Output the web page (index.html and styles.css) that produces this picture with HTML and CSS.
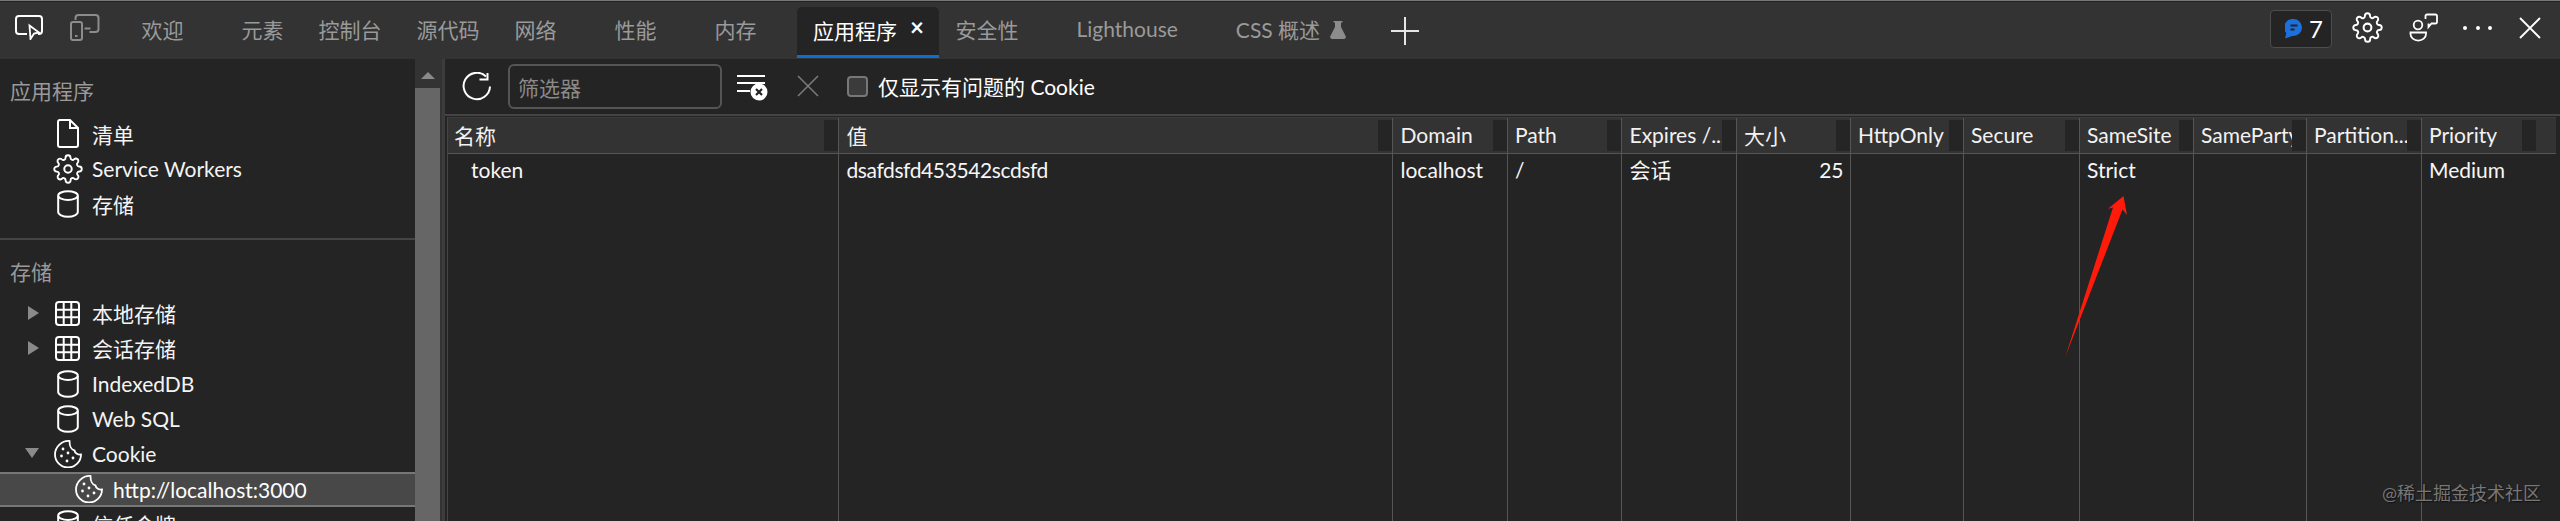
FILE: index.html
```html
<!DOCTYPE html>
<html lang="zh-CN">
<head>
<meta charset="utf-8">
<title>DevTools 应用程序</title>
<link rel="stylesheet" href="styles.css">
</head>
<body>
<svg class="defs" width="0" height="0" aria-hidden="true">
  <symbol id="gear" viewBox="0 0 24 24"><circle cx="12" cy="12" r="3" fill="none" stroke="currentColor" stroke-width="1.6"/><path fill="none" stroke="currentColor" stroke-width="1.5" d="M19.4 15a1.65 1.65 0 0 0 .33 1.82l.06.06a2 2 0 0 1 0 2.83 2 2 0 0 1-2.83 0l-.06-.06a1.65 1.65 0 0 0-1.82-.33 1.65 1.65 0 0 0-1 1.51V21a2 2 0 0 1-2 2 2 2 0 0 1-2-2v-.09A1.65 1.65 0 0 0 9 19.4a1.65 1.65 0 0 0-1.82.33l-.06.06a2 2 0 0 1-2.83 0 2 2 0 0 1 0-2.83l.06-.06a1.65 1.65 0 0 0 .33-1.82 1.65 1.65 0 0 0-1.51-1H3a2 2 0 0 1-2-2 2 2 0 0 1 2-2h.09A1.65 1.65 0 0 0 4.6 9a1.65 1.65 0 0 0-.33-1.82l-.06-.06a2 2 0 0 1 0-2.83 2 2 0 0 1 2.83 0l.06.06a1.65 1.65 0 0 0 1.82.33H9a1.65 1.65 0 0 0 1-1.51V3a2 2 0 0 1 2-2 2 2 0 0 1 2 2v.09a1.65 1.65 0 0 0 1 1.51 1.65 1.65 0 0 0 1.82-.33l.06-.06a2 2 0 0 1 2.83 0 2 2 0 0 1 0 2.83l-.06.06a1.65 1.65 0 0 0-.33 1.82V9a1.65 1.65 0 0 0 1.51 1H21a2 2 0 0 1 2 2 2 2 0 0 1-2 2h-.09a1.65 1.65 0 0 0-1.51 1z"/></symbol>
  <symbol id="db" viewBox="0 0 22 28"><g fill="none" stroke="currentColor" stroke-width="2"><path d="M1.2 6v16c0 2.6 4.4 4.8 9.8 4.8s9.8-2.2 9.8-4.8V6"/><ellipse cx="11" cy="5.6" rx="9.8" ry="4.4"/></g></symbol>
  <symbol id="grid" viewBox="0 0 25 25"><g fill="none" stroke="currentColor" stroke-width="2"><rect x="1" y="1" width="23" height="23" rx="3"/><path d="M8.7 1v23M16.3 1v23M1 8.7h23M1 16.3h23"/></g></symbol>
  <symbol id="cookie" viewBox="0 0 28 28"><path fill="none" stroke="currentColor" stroke-width="1.8" d="M15.5 1C8 .5 1 6.5 1 14.5a13 13 0 0 0 26 0c-3 .5-6-1-6.500-4-3 -.5-5-4.500-5-9.500z"/><g fill="currentColor"><circle cx="9" cy="9" r="1.400"/><circle cx="14" cy="13" r="1.400"/><circle cx="7.500" cy="16" r="1.400"/><circle cx="13" cy="21" r="1.400"/><circle cx="19" cy="18" r="1.400"/></g></symbol>
</svg>

<div class="app">
  <header class="topbar">
    <div class="tool-icons">
      <svg class="ic-inspect" width="28" height="25" viewBox="0 0 28 25"><path fill="none" stroke="#fff" stroke-width="2" d="M12 19H4a3 3 0 0 1-3-3V4a3 3 0 0 1 3-3h20a3 3 0 0 1 3 3v12a3 3 0 0 1-3 3h-1"/><path fill="#333" stroke="#fff" stroke-width="1.800" d="M14.500 10.500l9.500 7-5 1-3.500 5.500z"/></svg>
      <svg class="ic-device" width="30" height="27" viewBox="0 0 30 27"><g fill="none" stroke="#8c8c8c" stroke-width="2"><path d="M5.500 6V4a3 3 0 0 1 3-3h17a3 3 0 0 1 3 3v11a3 3 0 0 1-3 3h-6"/><rect x="1" y="8" width="11" height="18" rx="2"/><path d="M14.500 14.500h6M5 22h2.500"/></g></svg>
    </div>
    <nav class="tabs">
      <span class="tab">欢迎</span>
      <span class="tab tab-gap">元素</span>
      <span class="tab">控制台</span>
      <span class="tab">源代码</span>
      <span class="tab">网络</span>
      <span class="tab tab-gap">性能</span>
      <span class="tab tab-gap">内存</span>
      <span class="tab tab-active tab-gap">应用程序<span class="tab-close">×</span></span>
      <span class="tab tab-after">安全性</span>
      <span class="tab tab-gap">Lighthouse</span>
      <span class="tab tab-gap">CSS 概述<svg class="ic-flask" width="16" height="18" viewBox="0 0 16 18"><path fill="#8c8c8c" d="M3.500 0h9v1.500h-1.500v4.500l4.700 9.300c.5 1.200-.2 2.700-1.700 2.700H2c-1.500 0-2.200-1.500-1.700-2.700L5 6V1.500H3.500z"/></svg></span>
      <svg class="ic-plus" width="28" height="28" viewBox="0 0 28 28"><path stroke="#e6e6e6" stroke-width="2" d="M14 0v28M0 14h28"/></svg>
    </nav>
    <div class="top-right">
      <span class="badge">
        <svg width="17" height="20" viewBox="0 0 17 20"><path fill="#1b6fde" d="M8.500 0a8.500 8.500 0 0 1 0 17c-1.200 0-2.300-.2-3.300 .7L0 19.500l1.300-5.400A8.500 8.500 0 0 1 8.500 0z"/><path stroke="#242424" stroke-width="1.800" d="M5.500 6.500h7M5.500 10.500h4"/></svg>
        <span>7</span>
      </span>
      <svg class="ic-gear" width="31" height="31"><use href="#gear"/></svg>
      <svg class="ic-people" width="29" height="29" viewBox="0 0 29 29"><g fill="none" stroke="#fff" stroke-width="1.800"><circle cx="9" cy="12" r="4.300"/><path d="M1.500 19.500h15.500v1.500a7.700 6.500 0 0 1-15.500 0z"/><path d="M18 1.500h8.500a1.500 1.500 0 0 1 1.500 1.500v6a1.500 1.500 0 0 1-1.500 1.500h-4L19.500 14v-3.500M16.500 6V3A1.500 1.500 0 0 1 18 1.500"/></g></svg>
      <span class="dots"><i></i><i></i><i></i></span>
      <svg class="ic-close" width="22" height="22" viewBox="0 0 22 22"><path stroke="#fff" stroke-width="1.800" d="M1 1l20 20M21 1L1 21"/></svg>
    </div>
  </header>

  <div class="content">
    <aside class="sidebar">
      <section class="sb-section sb-first">
        <h2 class="sb-title">应用程序</h2>
        <div class="row"><span class="slot"><svg width="22" height="29" viewBox="0 0 22 29"><path fill="none" stroke="#fff" stroke-width="2" d="M3 1h10l8 8v17a2 2 0 0 1-2 2H3a2 2 0 0 1-2-2V3a2 2 0 0 1 2-2zM13 1v8h8"/></svg></span>清单</div>
        <div class="row"><span class="slot"><svg width="30" height="30"><use href="#gear"/></svg></span>Service Workers</div>
        <div class="row"><span class="slot"><svg width="22" height="28"><use href="#db"/></svg></span>存储</div>
      </section>
      <section class="sb-section sb-second">
        <h2 class="sb-title">存储</h2>
        <div class="row"><span class="arrow arrow-right"></span><span class="slot"><svg width="25" height="25"><use href="#grid"/></svg></span>本地存储</div>
        <div class="row"><span class="arrow arrow-right"></span><span class="slot"><svg width="25" height="25"><use href="#grid"/></svg></span>会话存储</div>
        <div class="row"><span class="slot"><svg width="22" height="28"><use href="#db"/></svg></span>IndexedDB</div>
        <div class="row"><span class="slot"><svg width="22" height="28"><use href="#db"/></svg></span>Web SQL</div>
        <div class="row"><span class="arrow arrow-down"></span><span class="slot"><svg width="28" height="28"><use href="#cookie"/></svg></span>Cookie</div>
        <div class="row row-selected"><span class="slot"><svg width="28" height="28"><use href="#cookie"/></svg></span>http://localhost:3000</div>
        <div class="row"><span class="slot"><svg width="22" height="28"><use href="#db"/></svg></span>信任令牌</div>
      </section>
    </aside>
    <div class="vscroll"><span class="vscroll-up"></span><span class="vscroll-thumb"></span></div>

    <main class="main">
      <div class="toolbar">
        <svg class="ic-refresh" width="30" height="29" viewBox="0 0 30 29"><g fill="none" stroke="#fff" stroke-width="2"><path d="M24 4.500A13.200 13.200 0 1 0 28 14.500"/><path d="M17.500 7.500h8V1"/></g></svg>
        <div class="filter">筛选器</div>
        <svg class="ic-clear" width="32" height="28" viewBox="0 0 32 28"><path stroke="#fff" stroke-width="2" d="M0 2h28M0 9h28M0 17h13"/><circle cx="22" cy="18" r="8.500" fill="#fff"/><path stroke="#242424" stroke-width="2.200" d="M19 15l6 6M25 15l-6 6"/></svg>
        <svg class="ic-x" width="22" height="22" viewBox="0 0 22 22"><path stroke="#7a7a7a" stroke-width="1.600" d="M1 1l20 20M21 1L1 21"/></svg>
        <label class="check"><span class="box"></span>仅显示有问题的 Cookie</label>
      </div>
      <div class="table">
        <div class="th th-name">名称</div>
        <div class="th">值</div>
        <div class="th">Domain</div>
        <div class="th">Path</div>
        <div class="th">Expires /...</div>
        <div class="th">大小</div>
        <div class="th">HttpOnly</div>
        <div class="th">Secure</div>
        <div class="th">SameSite</div>
        <div class="th">SameParty</div>
        <div class="th">Partition...</div>
        <div class="th">Priority</div>
        <div class="td td-name">token</div>
        <div class="td td-value">dsafdsfd453542scdsfd</div>
        <div class="td">localhost</div>
        <div class="td">/</div>
        <div class="td">会话</div>
        <div class="td td-num">25</div>
        <div class="td"></div>
        <div class="td"></div>
        <div class="td">Strict</div>
        <div class="td"></div>
        <div class="td"></div>
        <div class="td">Medium</div>
      </div>
    </main>
  </div>

  <svg class="annotation" width="70" height="170" viewBox="0 0 70 170"><path fill="#ff1a0a" d="M63.500 1L67 20l-4.500-5.500L5.300 162 53 12.500l-5 1.200z"/></svg>
  <div class="watermark">@稀土掘金技术社区</div>
</div>
</body>
</html>
```
FILE: styles.css
```css
* { box-sizing: border-box; }
html, body { margin: 0; padding: 0; height: 100%; overflow: hidden; background: #242424; }
body { font-family: "Lato", "Noto Sans CJK SC", sans-serif; font-size: 21px; color: #fff; }
.defs { position: absolute; }
svg { display: block; flex: none; }

.app { position: relative; height: 521px; display: flex; flex-direction: column; overflow: hidden; }

/* Top tab bar */
.topbar { height: 59px; flex: none; background: #333; border-top: 1px solid #777; box-shadow: inset 0 1px 0 #222; padding-top: 1px; display: flex; align-items: stretch; position: relative; }
.tool-icons { width: 124px; flex: none; display: flex; align-items: center; padding: 0 0 6px 15px; gap: 27px; }
.tabs { display: flex; align-items: flex-start; flex: 1; }
.tab { display: flex; align-items: center; height: 50px; margin-top: 5px; padding: 0 17.5px 7px; color: #9a9a9a; white-space: pre; }
.tab-gap { margin-left: 23px; }
.tab-after { margin-left: -1px; }
.tab-active { width: 142px; padding: 0 0 3px 16px; color: #fff; background: #242424; border-radius: 5px 5px 0 0; border-bottom: 3px solid #0a6fd0; height: 51px; }
.tab-close { font-size: 24px; margin-left: 13px; line-height: 1; font-weight: 700; margin-top: -5px; }
.ic-flask { margin-left: 10px; margin-top: 2px; }
.ic-plus { margin: 15px 0 0 27px; }

.top-right { display: flex; align-items: center; flex: none; padding: 0 19px 6px 0; }
.badge { width: 62px; height: 38px; display: flex; align-items: center; gap: 7px; padding-left: 14px; background: #242424; border: 1px solid #4d4d4d; border-radius: 4px; font-size: 24px; margin-top: 2px; }
.ic-gear { margin-left: 20px; color: #fff; }
.ic-people { margin-left: 26px; }
.dots { display: flex; gap: 8.500px; margin-left: 25px; }
.dots i { width: 4px; height: 4px; border-radius: 50%; background: #fff; }
.ic-close { margin-left: 27px; }

/* Panels */
.content { flex: 1; min-height: 0; display: flex; }
.sidebar { width: 415px; flex: none; background: #242424; overflow: hidden; }
.sb-section { padding-top: 14px; }
.sb-first { padding-bottom: 16px; border-bottom: 2px solid #444; }
.sb-title { margin: 0; height: 35px; line-height: 35px; padding-left: 10px; font-size: 21px; font-weight: 400; color: #9a9a9a; }
.sb-first .sb-title { margin-bottom: 8px; }
.sb-second .sb-title { margin-bottom: 7px; }

.row { position: relative; height: 35.200px; display: flex; align-items: center; padding-left: 50px; white-space: nowrap; color: #f4f4f4; }
.slot { width: 35px; height: 35px; margin-right: 7px; display: flex; align-items: center; justify-content: center; color: #fff; }
.row-selected { padding-left: 71px; background: #484848; border-top: 2px solid #777; border-bottom: 2px solid #777; color: #fff; }
.arrow { position: absolute; width: 0; height: 0; border-style: solid; border-color: transparent; }
.arrow-right { left: 28px; top: 10px; border-width: 7.500px 0 7.500px 11px; border-left-color: #8a8a8a; }
.arrow-down { left: 25px; top: 12px; border-width: 10px 7.500px 0; border-top-color: #8a8a8a; }

.vscroll { width: 30px; flex: none; background: #333; border-right: 3px solid #3c3c3c; display: flex; flex-direction: column; }
.vscroll-up { height: 29px; flex: none; position: relative; }
.vscroll-up::before { content: ""; position: absolute; left: 6px; top: 13px; border-style: solid; border-color: transparent; border-width: 0 7px 7px; border-bottom-color: #8a8a8a; }
.vscroll-thumb { flex: 1; margin: 0 2px 0 0; background: #666; }

.main { flex: 1; min-width: 0; display: flex; flex-direction: column; }
.toolbar { position: relative; height: 57px; flex: none; display: flex; align-items: center; border-bottom: 2px solid #444; padding-bottom: 1px; }
.ic-refresh { margin-left: 17px; }
.filter { width: 214px; height: 45px; margin-left: 16px; padding-left: 8px; line-height: 44px; border: 2px solid #555; border-radius: 6px; color: #8a8a8a; }
.ic-clear { margin-left: 15px; margin-top: 4px; }
.ic-x { margin-left: 28px; }
.check { display: flex; align-items: center; margin-left: 28px; }
.box { width: 21px; height: 21px; margin-right: 10px; background: #3b3b3b; border: 2px solid #777; border-radius: 4px; }

/* Cookie table */
.table { flex: 1; min-height: 0; margin: 1px 4px 0 2px; display: grid; grid-template-columns: 390px 554px 114.500px 114.500px 114.500px 114px 113px 116px 114px 113px 115px 1fr; grid-template-rows: 36px 1fr; border-left: 1px solid #444; border-top: 1px solid #3c3c3c; }
.th, .td { padding-left: 7.500px; border-left: 1px solid #555; white-space: nowrap; overflow: hidden; }
.th { position: relative; display: flex; align-items: center; height: 36px; background: #333; border-bottom: 1px solid #555; color: #f2f2f2; padding-bottom: 2px; }
.th::after { content: ""; position: absolute; right: 0; top: 2px; width: 14px; height: 31px; background: #252525; }
.th:nth-child(12)::after { right: 20px; }
.th-name, .td-name { border-left: 0; padding-left: 6px; }
.td { padding-top: 3px; line-height: 26px; color: #f6f6f6; }
.td-name { padding-left: 23px; }
.td-value { letter-spacing: -.4px; }
.td-num { padding-left: 0; padding-right: 6px; text-align: right; }

/* Overlays: screenshot annotation and watermark */
.annotation { position: absolute; left: 2060px; top: 195px; }
.watermark { position: absolute; left: 2382px; top: 481px; font-size: 18px; line-height: 24px; color: #777; text-shadow: 1px 1px 1px #111; }
```
